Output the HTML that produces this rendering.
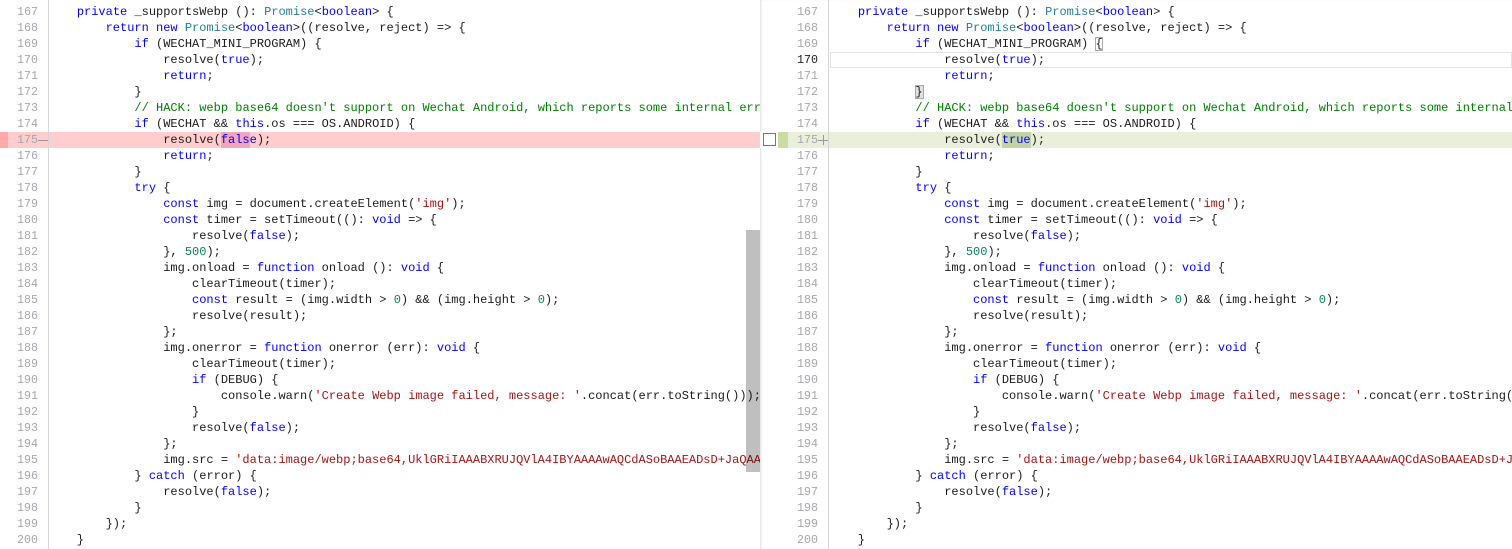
<!DOCTYPE html>
<html><head><meta charset="utf-8"><style>
html,body{margin:0;padding:0;width:1512px;height:549px;overflow:hidden;background:#fff;}
.pane{position:absolute;top:0;height:549px;overflow:hidden;background:#fff;}
#L{left:0;width:760px;}
#R{left:760px;width:752px;box-shadow:inset 2px 0 2px -1px #ddd;}
.gut{position:absolute;top:0;height:549px;border-right:1px solid #d6d6d6;}
pre{margin:0;position:absolute;top:-12px;font-family:"Liberation Mono",monospace;font-size:12px;line-height:16px;color:#1b1b1b;white-space:pre;}
pre.num{font-size:11.67px;}
.code{top:4px;}
.num{color:#a6a6b0;text-align:right;}
.k{color:#0000ff}.s{color:#a31515}.n{color:#098658}.c{color:#008000}.t{color:#267f99}
.hl{position:absolute;height:16px;}
</style></head><body>
<div class="pane" id="L">
 <div class="hl" style="top:132px;left:0;width:760px;background:#ffcdcd"></div>
 <div class="hl" style="top:132px;left:0;width:8px;background:#ffaaaa"></div>
 <div class="hl" style="top:132px;left:221px;width:29px;background:#f3a6ba"></div>
 <div class="gut" style="left:0;width:48px"></div>
 <pre class="num" style="left:0;width:38px">166
167
168
169
170
171
172
173
174
175
176
177
178
179
180
181
182
183
184
185
186
187
188
189
190
191
192
193
194
195
196
197
198
199
200</pre>
 <div style="position:absolute;left:38px;top:140px;width:10px;height:1px;background:#999"></div>
 <pre class="code" style="left:48px">    <span class="k">private</span> _supportsWebp (): <span class="t">Promise</span>&lt;<span class="k">boolean</span>&gt; {
        <span class="k">return new</span> <span class="t">Promise</span>&lt;<span class="k">boolean</span>&gt;((resolve, reject) =&gt; {
            <span class="k">if</span> (WECHAT_MINI_PROGRAM) {
                resolve(<span class="k">true</span>);
                <span class="k">return</span>;
            }
            <span class="c">// HACK: webp base64 doesn't support on Wechat Android, which reports some internal error</span>
            <span class="k">if</span> (WECHAT &amp;&amp; <span class="k">this</span>.os === OS.ANDROID) {
                resolve(<span class="k">false</span>);
                <span class="k">return</span>;
            }
            <span class="k">try</span> {
                <span class="k">const</span> img = document.createElement(<span class="s">'img'</span>);
                <span class="k">const</span> timer = setTimeout((): <span class="k">void</span> =&gt; {
                    resolve(<span class="k">false</span>);
                }, <span class="n">500</span>);
                img.onload = <span class="k">function</span> onload (): <span class="k">void</span> {
                    clearTimeout(timer);
                    <span class="k">const</span> result = (img.width &gt; <span class="n">0</span>) &amp;&amp; (img.height &gt; <span class="n">0</span>);
                    resolve(result);
                };
                img.onerror = <span class="k">function</span> onerror (err): <span class="k">void</span> {
                    clearTimeout(timer);
                    <span class="k">if</span> (DEBUG) {
                        console.warn(<span class="s">'Create Webp image failed, message: '</span>.concat(err.toString()));
                    }
                    resolve(<span class="k">false</span>);
                };
                img.src = <span class="s">'data:image/webp;base64,UklGRiIAAABXRUJQVlA4IBYAAAAwAQCdASoBAAEADsD+JaQAA3AAAAAA'</span>;
            } <span class="k">catch</span> (error) {
                resolve(<span class="k">false</span>);
            }
        });
    }</pre>
 <div style="position:absolute;left:746px;top:230px;width:14px;height:242px;background:rgba(0,0,0,0.25)"></div>
</div>
<div class="pane" id="R">
 <div class="hl" style="top:52px;left:70px;width:682px;border:1px solid #e4e4e4;box-sizing:border-box"></div>
 <div class="hl" style="top:132px;left:0;width:752px;background:#eaefdc"></div>
 <div class="hl" style="top:132px;left:0;width:18px;background:#fff"></div>
 <div class="hl" style="top:133px;left:3px;width:13px;height:13px;border:1px solid #4a7fc1;box-sizing:border-box;background:#fff"></div>
 <div class="hl" style="top:132px;left:18px;width:10px;background:#c9dca5"></div>
 <div class="hl" style="top:132px;left:242px;width:29px;background:#c2d4a4"></div>
 <div class="hl" style="top:85px;left:155px;width:9px;height:14px;background:#e2e2e2;border:1px solid #aaa;box-sizing:border-box"></div>
 <div class="hl" style="top:37px;left:335px;width:8px;height:14px;border:1px solid #aaa;box-sizing:border-box"></div>
 <div class="gut" style="left:0;width:68px"></div>
 <pre class="num" style="left:0;width:58px">166
167
168
169
<span style="color:#222">170</span>
171
172
173
174
175
176
177
178
179
180
181
182
183
184
185
186
187
188
189
190
191
192
193
194
195
196
197
198
199
200</pre>
 <div style="position:absolute;left:58px;top:140px;width:10px;height:1px;background:#999"></div>
 <div style="position:absolute;left:63px;top:135px;width:1px;height:10px;background:#999"></div>
 <pre class="code" style="left:69px">    <span class="k">private</span> _supportsWebp (): <span class="t">Promise</span>&lt;<span class="k">boolean</span>&gt; {
        <span class="k">return new</span> <span class="t">Promise</span>&lt;<span class="k">boolean</span>&gt;((resolve, reject) =&gt; {
            <span class="k">if</span> (WECHAT_MINI_PROGRAM) {
                resolve(<span class="k">true</span>);
                <span class="k">return</span>;
            }
            <span class="c">// HACK: webp base64 doesn't support on Wechat Android, which reports some internal error</span>
            <span class="k">if</span> (WECHAT &amp;&amp; <span class="k">this</span>.os === OS.ANDROID) {
                resolve(<span class="k">true</span>);
                <span class="k">return</span>;
            }
            <span class="k">try</span> {
                <span class="k">const</span> img = document.createElement(<span class="s">'img'</span>);
                <span class="k">const</span> timer = setTimeout((): <span class="k">void</span> =&gt; {
                    resolve(<span class="k">false</span>);
                }, <span class="n">500</span>);
                img.onload = <span class="k">function</span> onload (): <span class="k">void</span> {
                    clearTimeout(timer);
                    <span class="k">const</span> result = (img.width &gt; <span class="n">0</span>) &amp;&amp; (img.height &gt; <span class="n">0</span>);
                    resolve(result);
                };
                img.onerror = <span class="k">function</span> onerror (err): <span class="k">void</span> {
                    clearTimeout(timer);
                    <span class="k">if</span> (DEBUG) {
                        console.warn(<span class="s">'Create Webp image failed, message: '</span>.concat(err.toString()));
                    }
                    resolve(<span class="k">false</span>);
                };
                img.src = <span class="s">'data:image/webp;base64,UklGRiIAAABXRUJQVlA4IBYAAAAwAQCdASoBAAEADsD+JaQAA3AAAAAA'</span>;
            } <span class="k">catch</span> (error) {
                resolve(<span class="k">false</span>);
            }
        });
    }</pre>
</div>
</body></html>
